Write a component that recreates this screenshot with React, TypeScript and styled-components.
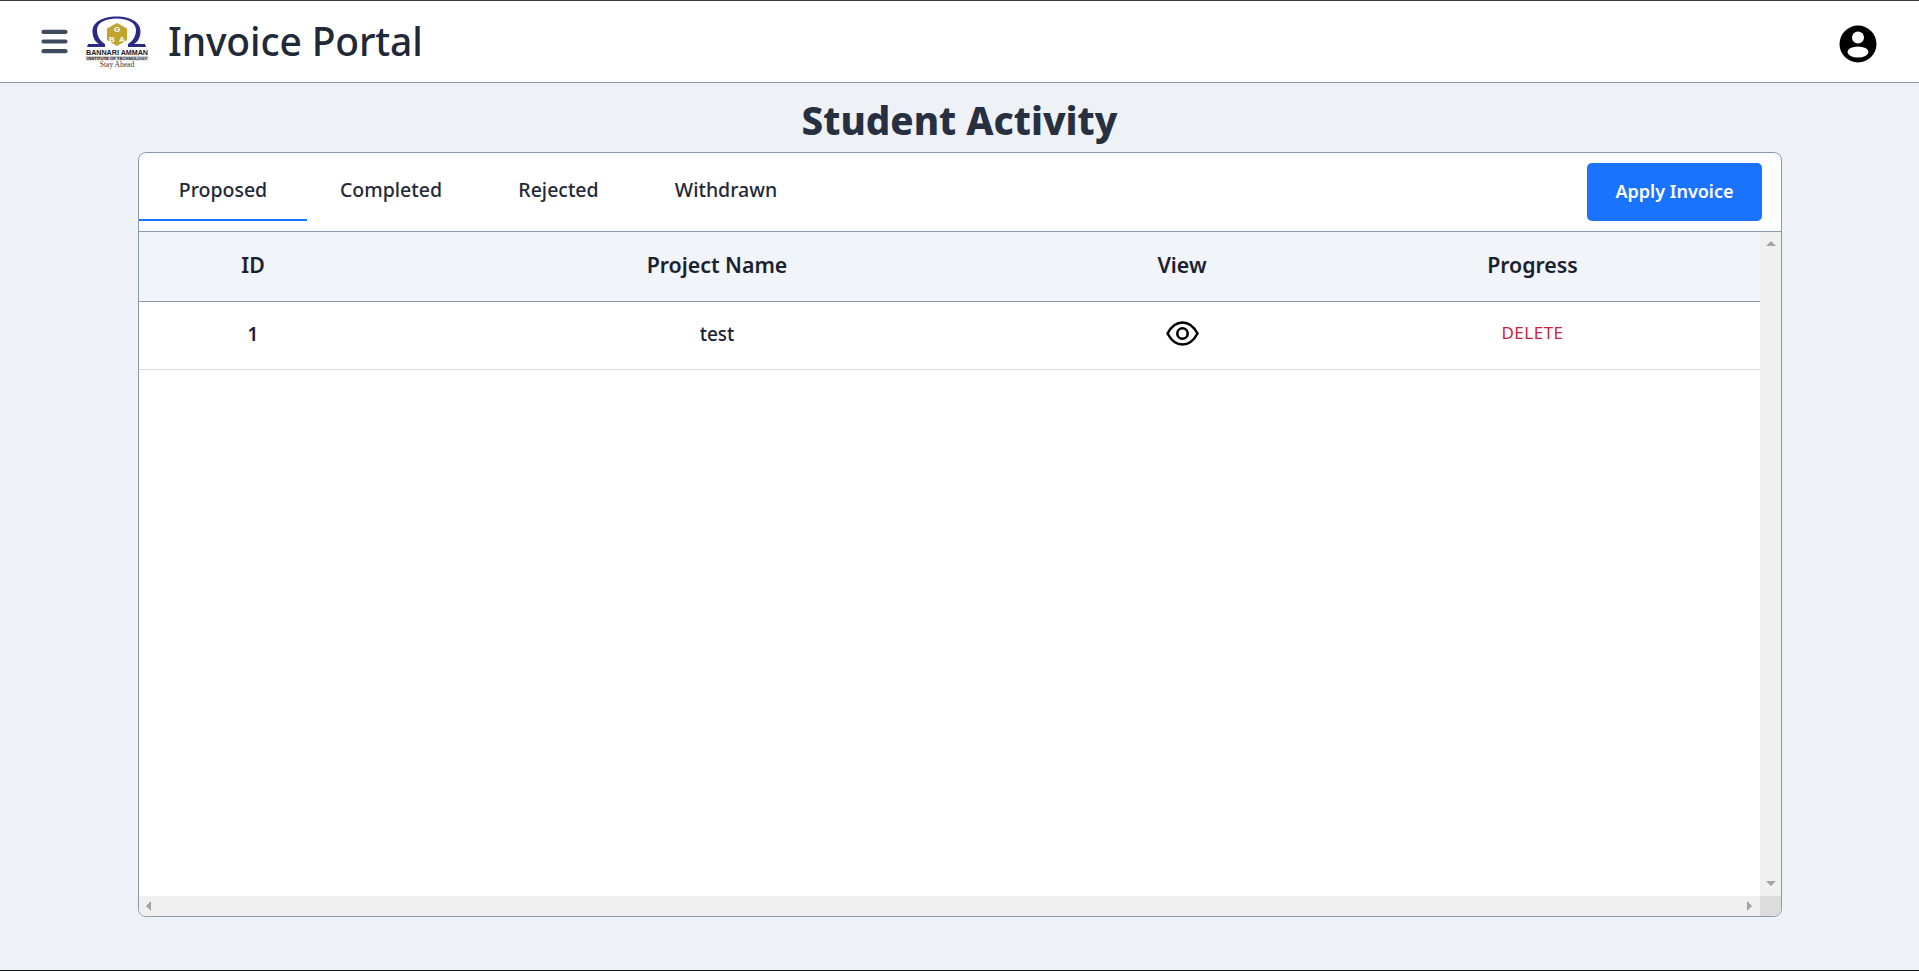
import React from "react";
import styled, { createGlobalStyle } from "styled-components";
import { Menu } from "lucide-react";

const Global = createGlobalStyle`
  html, body { margin: 0; padding: 0; height: 100%; }
  body { background: #eef1f6; font-family: "Noto Sans", "Open Sans", sans-serif; color: #1f2937; }
  * { box-sizing: border-box; }
`;

const Page = styled.div`
  height: 971px;
  display: flex;
  flex-direction: column;
  border-top: 1px solid #3a3a3a;
  border-bottom: 1px solid #111;
  overflow: hidden;
`;
const Header = styled.header`
  height: 82px;
  flex: none;
  background: #fff;
  border-bottom: 1px solid #8a9bae;
  display: flex;
  align-items: center;
  padding: 0 42px 0 38px;
`;
const MenuButton = styled.span`
  display: flex;
  color: #3e4a5e;
  margin-right: 13px;
`;
const LogoMark = styled.svg`
  flex: none;
  margin-top: 3px;
  overflow: visible;
`;
const Title = styled.h1`
  margin: 0 0 2px 18px;
  font-size: 39px;
  font-weight: 500;
  letter-spacing: -0.15px;
  color: #1f2937;
  flex: 1;
`;
const AvatarIcon = styled.svg`
  flex: none;
  margin-top: 5px;
`;
const Heading = styled.h2`
  margin: 0;
  height: 69px;
  padding-top: 4px;
  text-align: center;
  font-size: 38.5px;
  line-height: 66px;
  font-weight: 800;
  color: #263040;
`;
const Card = styled.section`
  margin: 0 137px 0 138px;
  height: 765px;
  background: #fff;
  border: 1px solid #8a9bae;
  border-radius: 8px;
  overflow: hidden;
  display: flex;
  flex-direction: column;
`;
const TabBar = styled.div`
  height: 79px;
  flex: none;
  display: flex;
  align-items: flex-start;
  border-bottom: 1px solid #8a9bae;
  padding-right: 19px;
`;
const Tab = styled.button<{ $active?: boolean; $w: number }>`
  width: ${(p) => p.$w}px;
  height: 68px;
  background: none;
  border: 0;
  border-bottom: 2px solid ${(p) => (p.$active ? "#1a73ff" : "transparent")};
  font: 500 19.5px "Noto Sans", sans-serif;
  color: #1f2937;
  padding: 7px 0 0;
`;
const ApplyButton = styled.button`
  margin: 10px 0 0 auto;
  width: 175px;
  height: 58px;
  background: #1a73ff;
  color: #fff;
  border: 0;
  border-radius: 5px;
  font: 600 18px "Noto Sans", sans-serif;
  padding: 0 0 2px;
`;
const ScrollArea = styled.div`
  flex: 1;
  min-height: 0;
  display: grid;
  grid-template-columns: 1fr 21px;
  grid-template-rows: 1fr 20px;
`;
const Table = styled.table`
  width: 100%;
  align-self: start;
  border-collapse: collapse;
  table-layout: fixed;
`;
const HeadCell = styled.th<{ $shift?: number }>`
  height: 69px;
  background: #f1f4f9;
  border-bottom: 1px solid #8a9bae;
  font-size: 21.3px;
  font-weight: 600;
  color: #1a2230;
  text-align: center;
  padding: 0 0 4px ${(p) => p.$shift ?? 0}px;
`;
const Cell = styled.td<{ $strong?: boolean; $shift?: number }>`
  height: 68px;
  border-bottom: 1px solid #d4d7db;
  font-size: 19px;
  font-weight: ${(p) => (p.$strong ? 600 : 500)};
  color: #1a2230;
  text-align: center;
  padding: 0 0 3px ${(p) => p.$shift ?? 0}px;
`;
const DeleteLink = styled.span`
  display: block;
  margin-bottom: 2px;
  color: #d0213a;
  font-size: 17px;
  font-weight: 400;
  letter-spacing: 0.5px;
`;
const EyeIcon = styled.svg`
  display: block;
  margin: 0 auto;
`;
const VTrack = styled.div`
  background: #f0f0f0;
  display: flex;
  flex-direction: column;
  justify-content: space-between;
  align-items: center;
  padding: 9px 0 10px;
`;
const HTrack = styled.div`
  background: #f0f0f0;
  display: flex;
  justify-content: space-between;
  align-items: center;
  padding: 0 8px 0 7px;
`;
const Corner = styled.div`
  background: #dcdcdc;
`;
const Arrow = styled.i<{ $dir: "up" | "down" | "left" | "right" }>`
  display: block;
  width: 0;
  height: 0;
  border: 5px solid transparent;
  ${(p) =>
    p.$dir === "up"
      ? "border-bottom: 5px solid #a3a3a3; border-top-width: 0;"
      : p.$dir === "down"
      ? "border-top: 5px solid #a3a3a3; border-bottom-width: 0;"
      : p.$dir === "left"
      ? "border-right: 5px solid #a3a3a3; border-left-width: 0;"
      : "border-left: 5px solid #a3a3a3; border-right-width: 0;"}
`;

const Logo = () => (
  <LogoMark width="66" height="54" viewBox="0 0 66 54" aria-label="Bannari Amman logo">
    <path
      d="M3 31 L4 28 H15 C10 25 8.500 20 8.500 15 C8.500 6 19 .5 32.500 .5 S56.500 6 56.500 15 C56.500 20 55 25 50 28 H61 L62 31 H44 V28 C49 25 52 20 52 14 C52 6 42 2.500 32.500 2.500 S13 6 13 14 C13 20 16 25 21 28 V31 Z"
      fill="#2a2a86"
    />
    <path d="M33 7 L43 12.500 V24 L33 30 L23 24 V12.500 Z" fill="#c2a32e" />
    <text x="33" y="16" fontFamily="Liberation Sans" fontSize="8" fontWeight="700" textAnchor="middle" fill="#fff">G</text>
    <text x="28" y="26" fontFamily="Liberation Sans" fontSize="8" fontWeight="700" textAnchor="middle" fill="#fff">B</text>
    <text x="38" y="26" fontFamily="Liberation Sans" fontSize="8" fontWeight="700" textAnchor="middle" fill="#fff">A</text>
    <text x="33" y="39" fontFamily="Liberation Sans" fontSize="7.400" fontWeight="700" textAnchor="middle" fill="#1a1a2e" textLength="62" lengthAdjust="spacingAndGlyphs">BANNARI AMMAN</text>
    <rect x="1.500" y="40" width="63" height="4.500" fill="#cfcfcf" />
    <text x="33" y="44" fontFamily="Liberation Sans" fontSize="4" fontWeight="700" textAnchor="middle" fill="#1a1a2e" textLength="60" lengthAdjust="spacingAndGlyphs">INSTITUTE OF TECHNOLOGY</text>
    <text x="33" y="51" fontFamily="Liberation Serif" fontSize="7.500" textAnchor="middle" fill="#333">Stay Ahead</text>
  </LogoMark>
);

const Avatar = () => (
  <AvatarIcon width="38" height="38" viewBox="0 0 38 38">
    <circle cx="19" cy="19" r="18.500" fill="#000" />
    <circle cx="19" cy="12.500" r="6" fill="#fff" />
    <ellipse cx="19" cy="27" rx="10.500" ry="5.500" fill="#fff" />
  </AvatarIcon>
);

const tabs: [string, number, boolean][] = [
  ["Proposed", 168, true],
  ["Completed", 168, false],
  ["Rejected", 167, false],
  ["Withdrawn", 168, false],
];

export default function App() {
  return (
    <>
      <Global />
      <Page>
        <Header>
          <MenuButton>
            <Menu size={33} strokeWidth={3} />
          </MenuButton>
          <Logo />
          <Title>Invoice Portal</Title>
          <Avatar />
        </Header>
        <Heading>Student Activity</Heading>
        <Card>
          <TabBar>
            {tabs.map(([t, w, a]) => (
              <Tab key={t} $w={w} $active={a}>
                {t}
              </Tab>
            ))}
            <ApplyButton>Apply Invoice</ApplyButton>
          </TabBar>
          <ScrollArea>
            <Table>
              <colgroup>
                <col style={{ width: 228 }} />
                <col style={{ width: 700 }} />
                <col style={{ width: 230 }} />
                <col />
              </colgroup>
              <thead>
                <tr>
                  <HeadCell>ID</HeadCell>
                  <HeadCell>Project Name</HeadCell>
                  <HeadCell>View</HeadCell>
                  <HeadCell $shift={8}>Progress</HeadCell>
                </tr>
              </thead>
              <tbody>
                <tr>
                  <Cell $strong>1</Cell>
                  <Cell>test</Cell>
                  <Cell>
                    <EyeIcon width="33" height="25" viewBox="0 0 33 25" fill="none" stroke="#000" strokeWidth="2.600">
                      <path d="M1.500 12.500C5.500 5 10.500 1.500 16.500 1.500S27.500 5 31.500 12.500C27.500 20 22.500 23.500 16.500 23.500S5.500 20 1.500 12.500Z" />
                      <circle cx="16.500" cy="12.500" r="5.200" />
                    </EyeIcon>
                  </Cell>
                  <Cell $shift={8}>
                    <DeleteLink>DELETE</DeleteLink>
                  </Cell>
                </tr>
              </tbody>
            </Table>
            <VTrack>
              <Arrow $dir="up" />
              <Arrow $dir="down" />
            </VTrack>
            <HTrack>
              <Arrow $dir="left" />
              <Arrow $dir="right" />
            </HTrack>
            <Corner />
          </ScrollArea>
        </Card>
      </Page>
    </>
  );
}
